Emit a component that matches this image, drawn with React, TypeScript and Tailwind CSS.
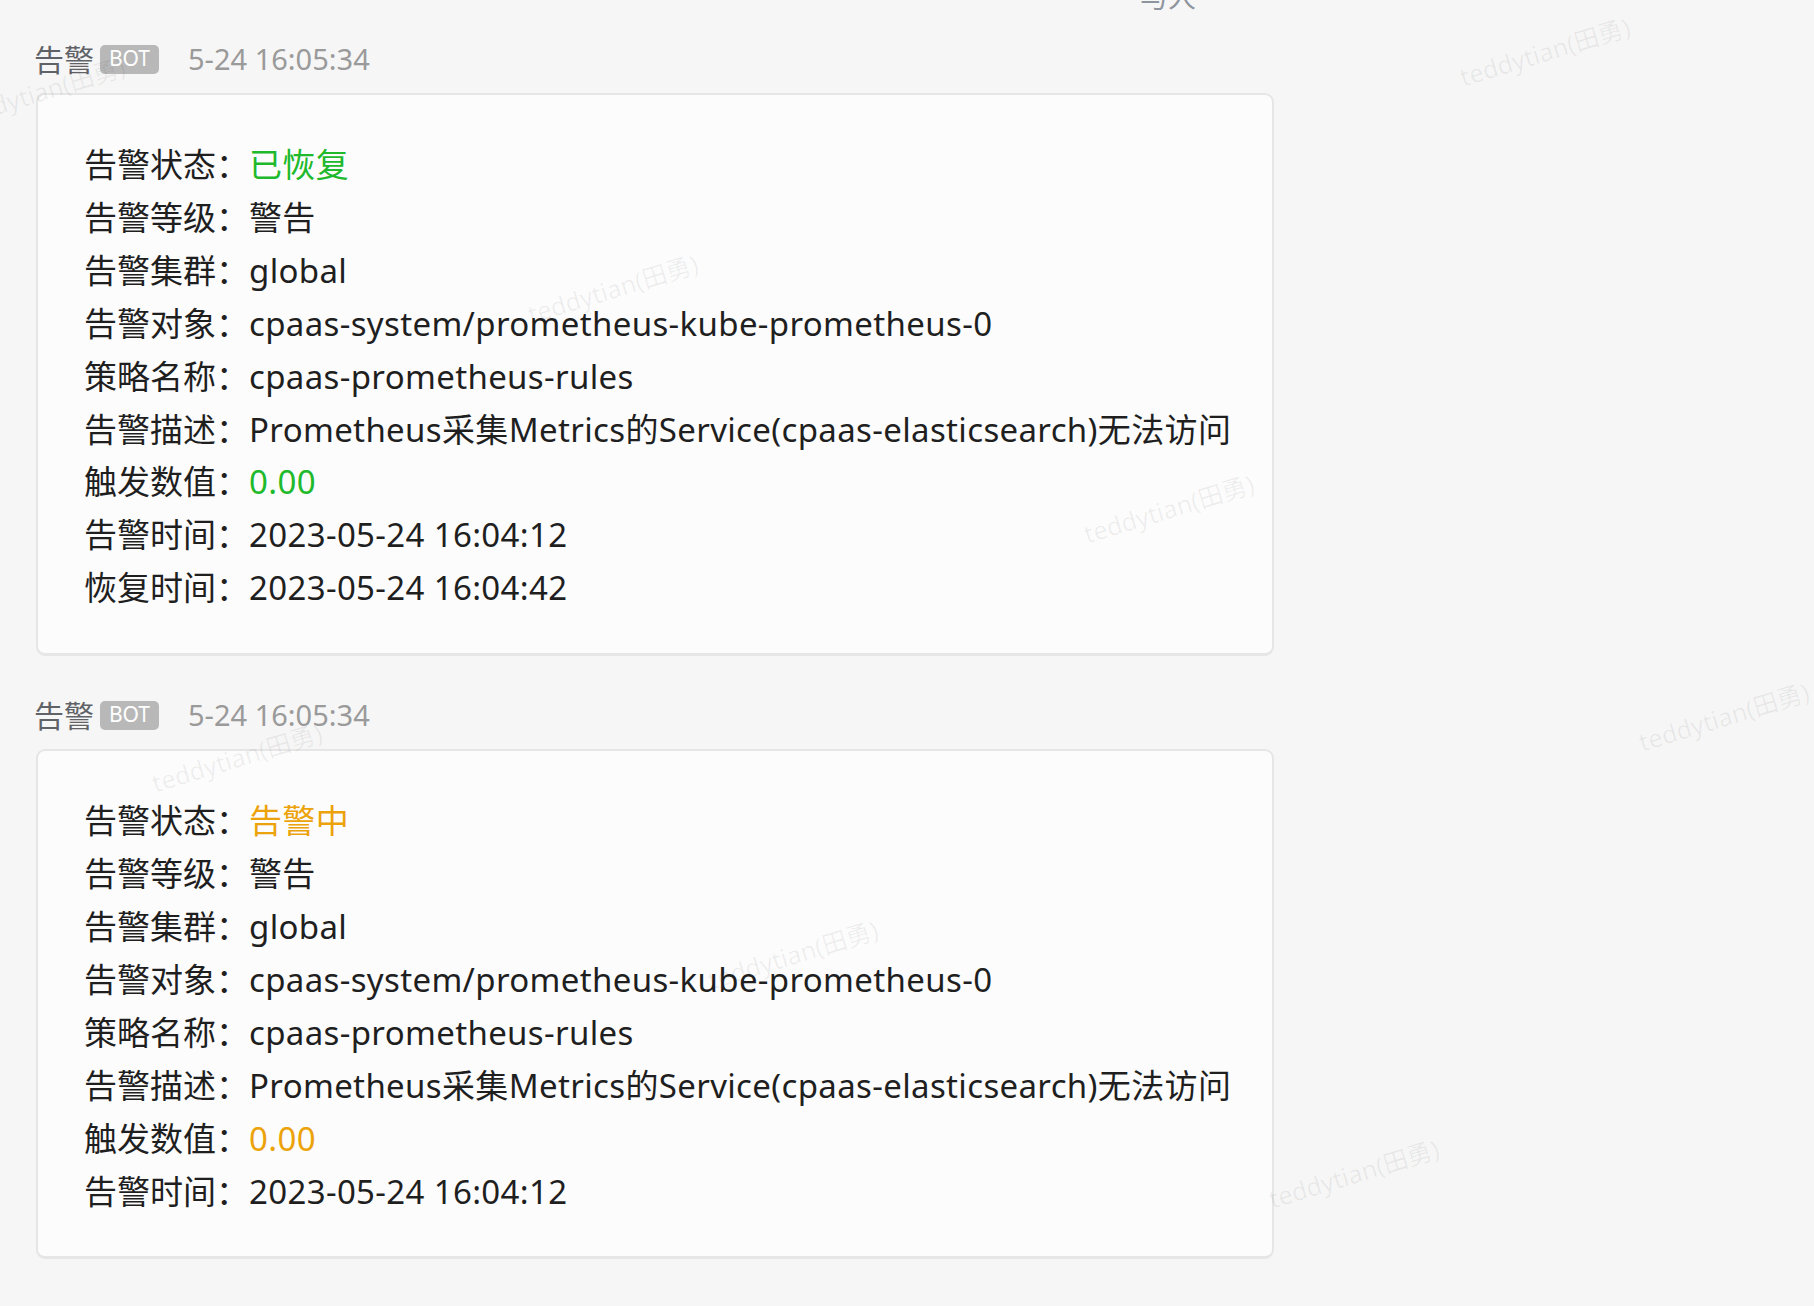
import React from 'react';

type Row = { label: string; value: string; tone?: 'green' | 'orange' };

interface Message {
  time: string;
  rows: Row[];
}

const messages: Message[] = [
  {
    time: '5-24 16:05:34',
    rows: [
      { label: '告警状态', value: '已恢复', tone: 'green' },
      { label: '告警等级', value: '警告' },
      { label: '告警集群', value: 'global' },
      { label: '告警对象', value: 'cpaas-system/prometheus-kube-prometheus-0' },
      { label: '策略名称', value: 'cpaas-prometheus-rules' },
      { label: '告警描述', value: 'Prometheus采集Metrics的Service(cpaas-elasticsearch)无法访问' },
      { label: '触发数值', value: '0.00', tone: 'green' },
      { label: '告警时间', value: '2023-05-24 16:04:12' },
      { label: '恢复时间', value: '2023-05-24 16:04:42' },
    ],
  },
  {
    time: '5-24 16:05:34',
    rows: [
      { label: '告警状态', value: '告警中', tone: 'orange' },
      { label: '告警等级', value: '警告' },
      { label: '告警集群', value: 'global' },
      { label: '告警对象', value: 'cpaas-system/prometheus-kube-prometheus-0' },
      { label: '策略名称', value: 'cpaas-prometheus-rules' },
      { label: '告警描述', value: 'Prometheus采集Metrics的Service(cpaas-elasticsearch)无法访问' },
      { label: '触发数值', value: '0.00', tone: 'orange' },
      { label: '告警时间', value: '2023-05-24 16:04:12' },
    ],
  },
];

// watermark centres, taken from the screenshot
const marks = [
  { left: 1545, top: 52 },
  { left: 40, top: 92 },
  { left: 613, top: 289 },
  { left: 1169, top: 509 },
  { left: 1724, top: 717 },
  { left: 237, top: 758 },
  { left: 793, top: 955 },
  { left: 1354, top: 1174 },
];

function toneClass(tone?: Row['tone']) {
  if (tone === 'green') return 'text-[#20b92b]';
  if (tone === 'orange') return 'text-[#eca30b]';
  return 'text-[#1f1f1f]';
}

function AlertCard({ message }: { message: Message }) {
  return (
    <div className="pt-[39px]">
      <div className="flex h-[40px] items-center">
        <span className="ml-[-2px] text-[30px] text-[#5f6368]">告警</span>
        <span className="ml-[6px] flex h-[29px] w-[59px] items-center justify-center rounded-[5px] bg-[#b8b8b8] text-[21px] text-white">
          BOT
        </span>
        <span className="ml-[29px] text-[29px] text-[#9a9a9a]">{message.time}</span>
      </div>

      <div className="mt-[14px] w-[1238px] rounded-[9px] border-2 border-b-[3px] border-[#e6e6e6] bg-[#fcfcfc] pb-[38px] pl-[46px] pt-[44px]">
        {message.rows.map((row) => (
          <div key={row.label} className="flex text-[33px] leading-[52.9px]">
            <span className="w-[165px] shrink-0 text-[#1f1f1f]">{row.label}：</span>
            <span className={`tracking-[0.35px] ${toneClass(row.tone)}`}>{row.value}</span>
          </div>
        ))}
      </div>
    </div>
  );
}

export default function App() {
  return (
    <div
      className="relative h-[1306px] w-[1814px] overflow-hidden bg-[#f6f6f6] pl-[36px]"
      style={{ fontFamily: '"Noto Sans", "Noto Sans CJK SC", sans-serif' }}
    >
      <span className="absolute left-[1140px] top-[-24px] text-[28px] text-[#8f959e]">与人</span>

      {messages.map((message, index) => (
        <AlertCard key={index} message={message} />
      ))}

      {marks.map((m, i) => (
        <span
          key={i}
          className="pointer-events-none absolute -translate-x-1/2 -translate-y-1/2 -rotate-[17deg] whitespace-nowrap text-[25px] text-black/[0.06]"
          style={{ left: m.left, top: m.top }}
        >
          teddytian(田勇)
        </span>
      ))}
    </div>
  );
}
